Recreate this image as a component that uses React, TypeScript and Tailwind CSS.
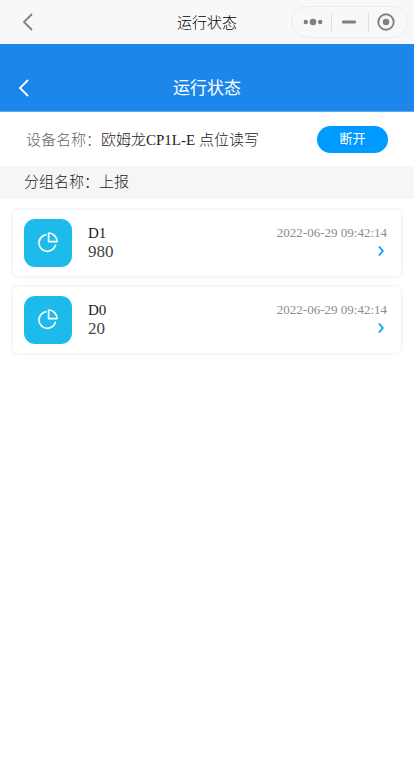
type Point = { name: string; value: string; time: string };

const points: Point[] = [
  { name: "D1", value: "980", time: "2022-06-29 09:42:14" },
  { name: "D0", value: "20", time: "2022-06-29 09:42:14" },
];

function BackIcon() {
  return (
    <svg width="12" height="20" viewBox="0 0 12 20" fill="none" stroke="currentColor" aria-hidden="true">
      <path d="M10 2 2 10l8 8" strokeWidth="1.8" />
    </svg>
  );
}

function PieIcon() {
  return (
    <svg width="22" height="22" viewBox="0 0 22 22" fill="none" stroke="#fff" strokeWidth="1.7" aria-hidden="true">
      <path d="M9.4 2.56A8.4 8.4 0 1 0 18.63 12.6" />
      <path d="M11.6 1V9.6H20A8.5 8.5 0 0 0 11.6 1Z" strokeLinejoin="round" />
    </svg>
  );
}

function Capsule() {
  return (
    <div className="flex h-8 w-[117px] items-center rounded-full border border-[#ececec] text-[#808080]">
      <button aria-label="更多" className="flex h-full w-[39px] items-center justify-center pl-[3px]">
        <svg width="20" height="8" viewBox="0 0 20 8" fill="currentColor" aria-hidden="true">
          <circle cx="2.8" cy="4" r="2.2" />
          <circle cx="10" cy="4" r="3.3" />
          <circle cx="17.2" cy="4" r="2.2" />
        </svg>
      </button>
      <span className="h-[18px] w-px bg-[#dedede]" />
      <button aria-label="最小化" className="flex h-full w-9 items-center justify-center pr-[2px]">
        <svg width="14" height="4" viewBox="0 0 14 4" aria-hidden="true">
          <rect y="0.5" width="14" height="3" rx="1.3" fill="currentColor" />
        </svg>
      </button>
      <span className="h-[18px] w-px bg-[#dedede]" />
      <button aria-label="关闭" className="flex h-full flex-1 items-center justify-center pr-1">
        <svg width="18" height="18" viewBox="0 0 18 18" aria-hidden="true">
          <circle cx="9" cy="9" r="7.7" fill="none" stroke="currentColor" strokeWidth="1.9" />
          <circle cx="9" cy="9" r="3.2" fill="currentColor" />
        </svg>
      </button>
    </div>
  );
}

function PointCard({ point }: { point: Point }) {
  return (
    <li className="flex rounded-[5px] bg-white py-[9px] pr-[14px] pl-[11px] shadow-[0_0_4px_rgba(0,0,0,0.11)]">
      <div className="flex size-12 items-center justify-center rounded-[11px] bg-[#1dbbeb]">
        <PieIcon />
      </div>
      <div className="ml-4 flex-1 pt-1">
        <div className="h-5 text-[15px] leading-5 text-[#222]">{point.name}</div>
        <div className="text-[17px] leading-[18px] text-[#444]">{point.value}</div>
      </div>
      <div className="flex flex-col items-end pt-1">
        <time className="h-5 text-[13px] leading-5 text-[#8c8c8c]">{point.time}</time>
        <button aria-label={`${point.name} 详情`} className="flex h-4 items-center pr-[3px] text-[#109bf5]">
          <svg width="6" height="10" viewBox="0 0 6 10" fill="none" stroke="currentColor" strokeWidth="1.8" aria-hidden="true">
            <path d="M1 0.5 4.8 5 1 9.5" />
          </svg>
        </button>
      </div>
    </li>
  );
}

export default function App() {
  return (
    <div className="min-h-screen bg-white font-['Liberation_Serif','Noto_Sans_CJK_SC',serif] font-light">
      <header className="grid h-11 grid-cols-[1fr_auto_1fr] items-center bg-[#f8f8f8] pr-[6px] pl-[22px]">
        <button aria-label="返回" className="justify-self-start text-[#808080]">
          <BackIcon />
        </button>
        <span className="mr-4 pt-px text-[15px] leading-5 text-black">运行状态</span>
        <div className="justify-self-end">
          <Capsule />
        </div>
      </header>

      <div className="border-b border-[#5fabf2] bg-[#1c86ea] pt-5 text-white">
        <div className="grid h-[47px] grid-cols-[1fr_auto_1fr] items-center px-[18px]">
          <button aria-label="返回上一页" className="justify-self-start">
            <BackIcon />
          </button>
          <h1 className="pt-[2px] text-[17px] leading-6 font-normal">运行状态</h1>
        </div>
      </div>

      <main>
        <section className="flex h-[54px] items-center justify-between px-[26px] text-[15px] leading-5">
          <div className="flex pt-[2px] text-[#222]">
            <span className="text-[#666]">设备名称：</span>
            <span>欧姆龙CP1L-E 点位读写</span>
          </div>
          <button className="h-[27px] w-[71px] rounded-full bg-[#009bff] text-[13px] leading-5 font-normal text-white">
            断开
          </button>
        </section>
        <h2 className="bg-[#f6f6f6] px-6 py-[6px] text-[15px] leading-[21px] font-light text-[#222]">分组名称：上报</h2>
        <ul className="flex flex-col gap-[11px] px-[13px] py-[11px]">
          {points.map((p) => (
            <PointCard key={p.name} point={p} />
          ))}
        </ul>
      </main>
    </div>
  );
}
